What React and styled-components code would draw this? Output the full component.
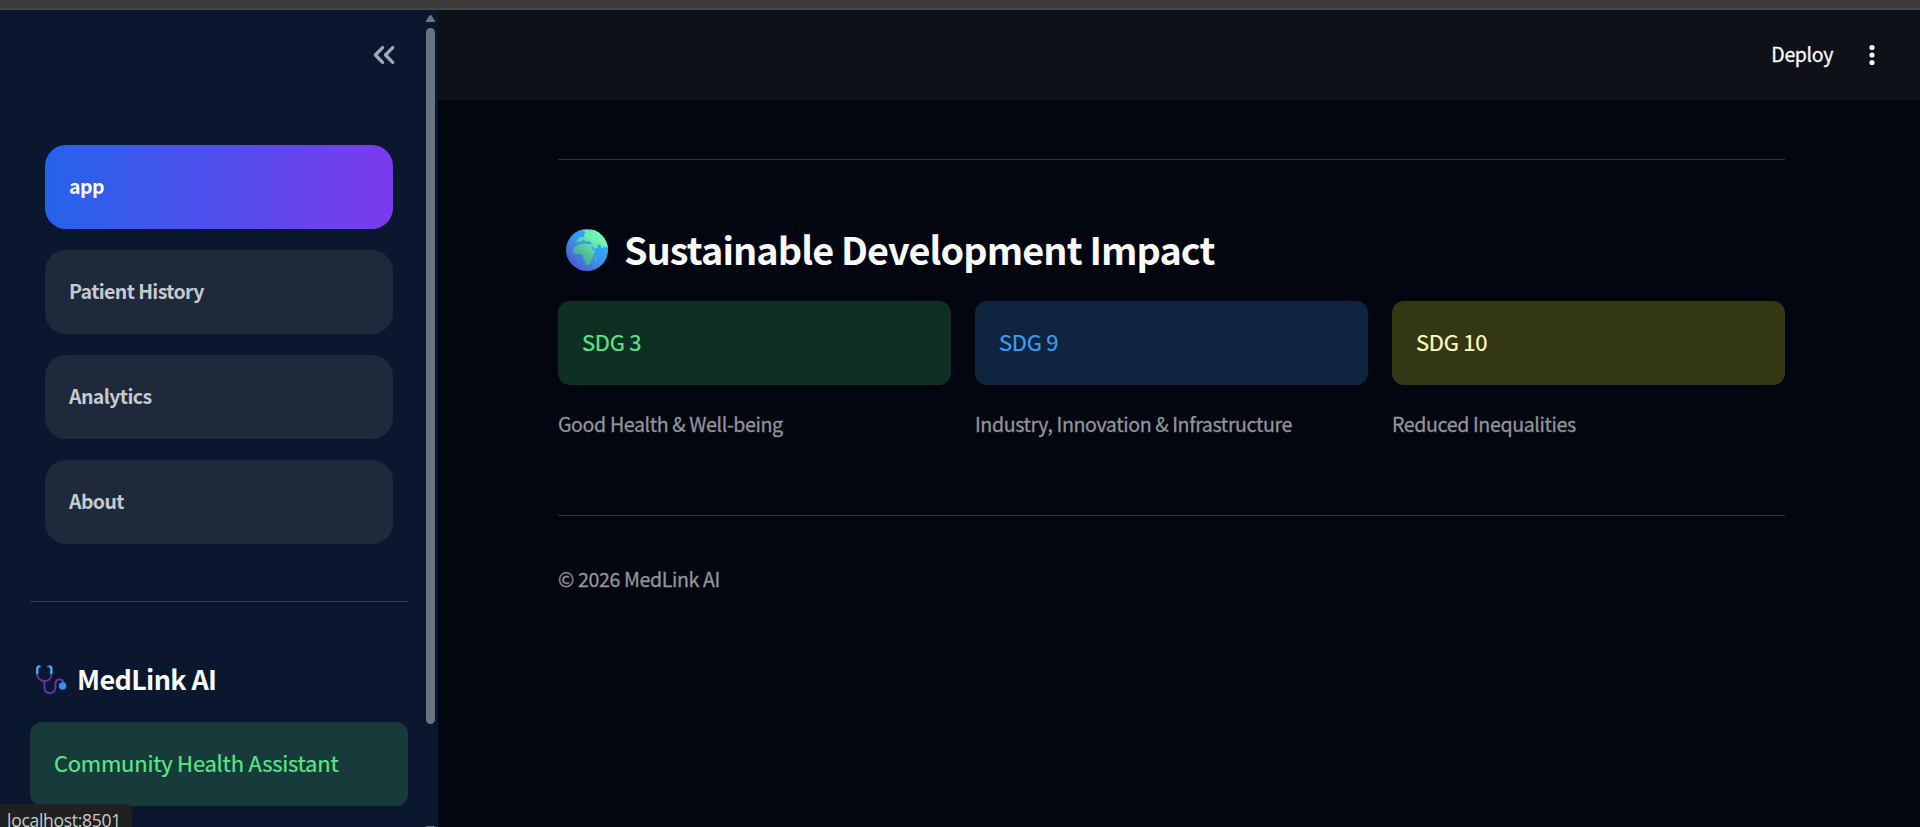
import React from "react";
import styled, { createGlobalStyle, css } from "styled-components";

const pages = ["app", "Patient History", "Analytics", "About"];

const goals = [
  { name: "SDG 3", text: "Good Health & Well-being", tone: "success" },
  { name: "SDG 9", text: "Industry, Innovation & Infrastructure", tone: "info" },
  { name: "SDG 10", text: "Reduced Inequalities", tone: "warning" },
];

const CollapseIcon = () => (
  <svg width="24" height="24" viewBox="0 0 24 24" fill="none">
    <path
      d="M10.6 4.6 L3.4 12 L10.6 19.4 M20.7 4.6 L13.5 12 L20.7 19.4"
      stroke="#a3a8b4"
      strokeWidth="3.3"
      strokeLinecap="round"
      strokeLinejoin="round"
    />
  </svg>
);

const MenuIcon = () => (
  <svg width="24" height="24" viewBox="0 0 24 24" fill="#fafafa">
    <circle cx="12" cy="4.5" r="2.6" />
    <circle cx="12" cy="12" r="2.6" />
    <circle cx="12" cy="19.5" r="2.6" />
  </svg>
);

const Globe = () => (
  <svg width="42" height="42" viewBox="0 0 42 42">
    <defs>
      <linearGradient id="sea" x1="0.85" y1="0.2" x2="0.2" y2="0.9">
        <stop offset="0" stopColor="#2bb2fb" />
        <stop offset="0.5" stopColor="#3a94ec" />
        <stop offset="1" stopColor="#4a5ccc" />
      </linearGradient>
      <linearGradient id="land" x1="0.85" y1="0.1" x2="0.3" y2="0.75">
        <stop offset="0" stopColor="#78ffb4" />
        <stop offset="0.4" stopColor="#6bedb0" />
        <stop offset="1" stopColor="#4fb596" />
      </linearGradient>
      <clipPath id="disc">
        <circle cx="21" cy="21" r="21" />
      </clipPath>
    </defs>
    <g clipPath="url(#disc)">
      <rect width="42" height="42" fill="url(#sea)" />
      <path
        fill="url(#land)"
        d="M15 1.5 L20 3 L18 5 L18.5 7.5 L15.5 8.5 L13 8 L12.5 10 L10 12 L12.5 13.2 L15.5 12.5 L17.5 10.5 L20 13 L22.5 11.8 L24 13.8 L26.5 13.2 L24.5 15.6 L18.5 14.6 L13 15.5 L8.5 18.3 L7 20.8 L7.4 23.3 L10 25 L15 24.8 L17 26.4 L17 29 L19.2 32 L20 35.7 L22 36.3 L24.2 34.4 L24.7 31.8 L26.5 29.8 L27 26 L29 23.4 L29.5 21.6 L27 21.2 L25.4 17.3 L26.4 17 L29 20.2 L31.8 18.5 L31.5 15.7 L34.5 15.5 L35.8 19.8 L38.5 17.6 L42 19 L42 0 L25 0 L24.5 2.5 L22 1 Z"
      />
      <path fill="#55c3a0" d="M29 29 L30.5 27.3 L30 31 L28.8 32 Z" />
    </g>
  </svg>
);

const Stethoscope = () => (
  <svg width="32" height="30" viewBox="0 0 32 30" fill="none">
    <path
      d="M1.2 9 C1.2 13 4.2 16 8.6 16 C13 16 15.4 13 15.4 9 M8.4 16 V21.5 C8.4 25.5 10.5 28.2 14 28.2 C17.5 28.2 19.4 25.5 19.4 22 V19.5 C19.4 16.5 20.8 14.6 23.5 14.6 C25.8 14.6 27.3 16 27.8 18"
      stroke="#6534a5"
      strokeWidth="2"
    />
    <path d="M3.2 1.4 L5.6 1.8 M13.4 1.4 L11 1.8" stroke="#6436a8" strokeWidth="2" />
    <path
      d="M3.8 1.4 C2 1.4 1.2 2.2 1.2 4 V9 M12.8 1.4 C14.6 1.4 15.4 2.2 15.4 4 V9"
      stroke="#36b9fa"
      strokeWidth="2.3"
    />
    <circle cx="26.6" cy="21" r="3.7" fill="#3c8dff" />
  </svg>
);

const App = () => {
  return (
    <>
      <GlobalStyle />
      <Screen>
        <WindowEdge />
        <Layout>
          <Sidebar>
            <SidebarContent>
              <SidebarHeader>
                <CollapseIcon />
              </SidebarHeader>
              <Nav>
                {pages.map((page, i) => (
                  <NavLink key={page} $active={i === 0}>
                    {page}
                  </NavLink>
                ))}
              </Nav>
              <SidebarBody>
                <Divider $side />
                <Brand>
                  <Stethoscope />
                  <span>MedLink AI</span>
                </Brand>
                <Alert $tone="sidebar">Community Health Assistant</Alert>
              </SidebarBody>
            </SidebarContent>
            <Scrollbar>
              <svg width="9" height="7" viewBox="0 0 9 7">
                <path d="M4.5 0 C5.3 0 5.8 0.8 9 5.8 V7 H0 V5.8 C3.2 0.8 3.7 0 4.5 0 Z" fill="#6b7280" />
              </svg>
              <Thumb />
              <ScrollEnd />
            </Scrollbar>
          </Sidebar>
          <Main>
            <Header>
              <Deploy>Deploy</Deploy>
              <MenuIcon />
            </Header>
            <Content>
              <Divider />
              <Title>
                <Globe />
                <span>Sustainable Development Impact</span>
              </Title>
              <Columns>
                {goals.map((goal) => (
                  <div key={goal.name}>
                    <Alert $tone={goal.tone}>{goal.name}</Alert>
                    <Caption>{goal.text}</Caption>
                  </div>
                ))}
              </Columns>
              <Divider />
              <Footer>© 2026 MedLink AI</Footer>
            </Content>
          </Main>
        </Layout>
        <StatusBubble>localhost:8501</StatusBubble>
      </Screen>
    </>
  );
};

const GlobalStyle = createGlobalStyle`
  * {
    box-sizing: border-box;
    margin: 0;
    padding: 0;
  }
  body {
    background: #020611;
    color: #fafafa;
    font-family: "Noto Sans CJK SC", "Noto Sans", sans-serif;
    overflow: hidden;
  }
  svg {
    display: block;
    flex-shrink: 0;
  }
`;

const Screen = styled.div`
  display: flex;
  flex-direction: column;
  position: relative;
  height: 827px;
  overflow: hidden;
`;

const WindowEdge = styled.div`
  height: 10px;
  flex-shrink: 0;
  background: #3c3c3c;
  border-bottom: 2px solid #454545;
`;

const Layout = styled.div`
  display: flex;
  flex: 1;
  min-height: 0;
`;

const Sidebar = styled.aside`
  display: flex;
  width: 438px;
  flex-shrink: 0;
  background: #0a172f;
  overflow: hidden;
`;

const SidebarContent = styled.div`
  width: 426px;
`;

const SidebarHeader = styled.div`
  display: flex;
  justify-content: flex-end;
  align-items: center;
  height: 90px;
  padding-right: 30px;
`;

const Nav = styled.nav`
  display: flex;
  flex-direction: column;
  gap: 21px;
  padding: 45px 33px 0 45px;
`;

const NavLink = styled.a`
  display: flex;
  align-items: center;
  height: 84px;
  padding: 0 24px 3px;
  border-radius: 21px;
  background: #1e293b;
  color: #c6c9ce;
  font-size: 19.5px;
  font-weight: 700;
  letter-spacing: -0.6px;
  ${(props) =>
    props.$active &&
    css`
      background: linear-gradient(90deg, #2563eb, #7c3aed);
      color: #fafafa;
    `}
`;

const SidebarBody = styled.div`
  padding: 57px 18px 0 30px;
`;

const Divider = styled.hr`
  border: none;
  height: 1px;
  background: ${(props) => (props.$side ? "#364259" : "#31343c")};
`;

const Brand = styled.h3`
  display: flex;
  align-items: center;
  gap: 9px;
  height: 120px;
  padding: 36px 0 0 6px;
  font-size: 27px;
  font-weight: 700;
  letter-spacing: -0.65px;
  span {
    padding-bottom: 4px;
  }
`;

const tones = {
  sidebar: ["#173b3b", "#5ce488"],
  success: ["#102f23", "#5ce488"],
  info: ["#0e243f", "#3d9df3"],
  warning: ["#343713", "#ffffc2"],
};

const Alert = styled.div`
  display: flex;
  align-items: center;
  height: 84px;
  padding: 0 24px 4px;
  border-radius: 12px;
  background: ${(props) => tones[props.$tone][0]};
  color: ${(props) => tones[props.$tone][1]};
  font-size: 22px;
  letter-spacing: -0.25px;
  -webkit-text-stroke: 0.2px;
`;

const Scrollbar = styled.div`
  display: flex;
  flex-direction: column;
  width: 9px;
  padding-top: 5px;
`;

const Thumb = styled.div`
  height: 696px;
  margin-top: 6px;
  flex-shrink: 0;
  border-radius: 5px;
  background: #6b7280;
`;

const ScrollEnd = styled.div`
  height: 1px;
  margin-top: auto;
  background: #6b7280;
`;

const Main = styled.main`
  flex: 1;
`;

const Header = styled.header`
  display: flex;
  align-items: center;
  justify-content: flex-end;
  gap: 27px;
  height: 90px;
  padding-right: 36px;
  background: #0e1117;
`;

const Deploy = styled.span`
  padding-bottom: 4px;
  font-size: 19.5px;
  letter-spacing: -0.35px;
  -webkit-text-stroke: 0.3px;
`;

const Content = styled.section`
  padding: 59px 135px 0 120px;
`;

const Title = styled.h2`
  display: flex;
  align-items: center;
  gap: 16px;
  height: 141px;
  padding: 38px 0 0 8px;
  font-size: 37.8px;
  font-weight: 700;
  letter-spacing: -0.9px;
  span {
    padding-bottom: 2px;
  }
`;

const Columns = styled.div`
  display: grid;
  grid-template-columns: repeat(3, 1fr);
  gap: 24px;
  height: 214px;
`;

const Caption = styled.p`
  margin-top: 23px;
  font-size: 19.6px;
  line-height: 32px;
  letter-spacing: -0.38px;
  color: #929499;
  white-space: nowrap;
  -webkit-text-stroke: 0.3px;
`;

const Footer = styled(Caption)`
  margin-top: 47px;
`;

const StatusBubble = styled.div`
  position: absolute;
  left: 0;
  top: 804px;
  width: 132px;
  height: 34px;
  padding-left: 7px;
  border-top-right-radius: 6px;
  background: #1f2020;
  color: #c9cbcd;
  font-family: "Open Sans", sans-serif;
  font-size: 17.5px;
  line-height: 33px;
  letter-spacing: -0.28px;
`;

export default App;
